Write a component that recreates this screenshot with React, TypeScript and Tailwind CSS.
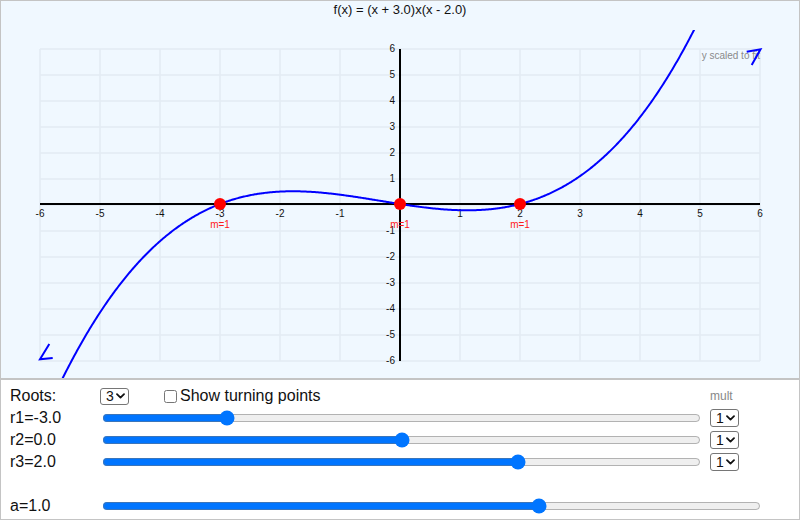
import { useState } from 'react'

const X0 = 400
const Y0 = 204
const UX = 60
const UY = 26
const K = 1.55

const font = "'Liberation Sans', Arial, sans-serif"

function fmtFactor(r: number) {
  if (r === 0) return 'x'
  return r < 0 ? `(x + ${(-r).toFixed(1)})` : `(x - ${r.toFixed(1)})`
}

function Chevron({ className }: { className?: string }) {
  return (
    <svg className={className} width="9" height="6" viewBox="0 0 9 6">
      <path d="M1 1.2 L4.5 4.6 L8 1.2" fill="none" stroke="#111" strokeWidth="1.8" strokeLinecap="round" strokeLinejoin="round" />
    </svg>
  )
}

function MiniSelect({ value, onChange, options, h }: { value: number; onChange: (v: number) => void; options: number[]; h: string }) {
  return (
    <div className="relative inline-block">
      <select
        value={value}
        onChange={(e) => onChange(parseInt(e.target.value))}
        className={`appearance-none block w-[29px] ${h} border border-[#767676] rounded-[3px] bg-white pl-[5px] text-[14px] leading-none text-[#111] outline-none`}
      >
        {options.map((o) => (
          <option key={o} value={o}>{o}</option>
        ))}
      </select>
      <Chevron className="absolute right-[4px] top-1/2 -translate-y-1/2 pointer-events-none" />
    </div>
  )
}

function Graph({ roots, a }: { roots: number[]; a: number }) {
  const f = (x: number) => roots.reduce((p, r) => p * (x - r), a)
  const pts: string[] = []
  for (let px = 40; px <= 760; px += 1) {
    const x = (px - X0) / UX
    const py = Y0 - f(x) * K
    pts.push(`${px},${Math.max(-500, Math.min(900, py)).toFixed(2)}`)
  }
  const ticks = [-6, -5, -4, -3, -2, -1, 1, 2, 3, 4, 5, 6]
  const grid = Array.from({ length: 13 }, (_, i) => i)

  return (
    <svg width="798" height="377" viewBox="1 1 798 377" className="block" style={{ fontFamily: font }}>
      <defs>
        <clipPath id="plotclip">
          <rect x="0" y="30" width="800" height="350" />
        </clipPath>
      </defs>
      <rect x="0" y="0" width="800" height="380" fill="#f0f8ff" />
      {grid.map((i) => (
        <line key={'v' + i} x1={40 + i * UX} y1={49} x2={40 + i * UX} y2={361} stroke="#e3ebf3" strokeWidth="1.5" />
      ))}
      {grid.map((i) => (
        <line key={'h' + i} x1={40} y1={49 + i * UY} x2={760} y2={49 + i * UY} stroke="#e3ebf3" strokeWidth="1.5" />
      ))}
      <line x1={40} y1={Y0} x2={760} y2={Y0} stroke="#000" strokeWidth="2" />
      <line x1={X0} y1={49} x2={X0} y2={361} stroke="#000" strokeWidth="2" />

      <text x={400} y={14} fontSize="13" textAnchor="middle" fill="#111">
        f(x) = {a === 1 ? '' : a.toFixed(1)}{roots.map(fmtFactor).join('')}
      </text>

      {ticks.map((t) => (
        <text key={'xl' + t} x={X0 + t * UX} y={216.8} fontSize="10" textAnchor="middle" fill="#111">{t}</text>
      ))}
      {ticks.map((t) => (
        <text key={'yl' + t} x={395} y={Y0 - t * UY + 3.8} fontSize="10" textAnchor="end" fill="#111">{t}</text>
      ))}

      <text x={760} y={59} fontSize="10" textAnchor="end" fill="#8a8a8a">y scaled to fit</text>

      <polyline points={pts.join(' ')} fill="none" stroke="#0000ff" strokeWidth="2" clipPath="url(#plotclip)" />

      <path d="M746.7 51.8 L760.5 49.3 L751.7 65" fill="none" stroke="#0000ff" strokeWidth="2" />
      <path d="M49.3 344 L40 359.3 L52.7 358" fill="none" stroke="#0000ff" strokeWidth="2" />

      {roots.map((r, i) => (
        <g key={'r' + i}>
          <circle cx={X0 + r * UX} cy={Y0} r={6} fill="#ff0000" />
          <text x={X0 + r * UX} y={228} fontSize="10" textAnchor="middle" fill="#ff1a1a">m=1</text>
        </g>
      ))}
    </svg>
  )
}

export default function App() {
  const [count, setCount] = useState(3)
  const [roots, setRoots] = useState([-3, 0, 2])
  const [mult, setMult] = useState([1, 1, 1])
  const [a, setA] = useState(1)
  const [turning, setTurning] = useState(false)

  const active = roots.slice(0, count)

  return (
    <div className="w-[800px] h-[522px] bg-white text-[#111]" style={{ fontFamily: font }}>
      <div className="h-[379px] border border-[#c4c4c4]">
        <Graph roots={active} a={a} />
      </div>

      <div className="h-[141px] border border-[#c4c4c4] pl-[9px] pt-[5px] text-[16px]">
        <div className="flex items-center h-[22px]">
          <span className="w-[90px]">Roots:</span>
          <MiniSelect value={count} onChange={setCount} options={[1, 2, 3]} h="h-[17px]" />
          <label className="flex items-center ml-[35px] w-[546px]">
            <input
              type="checkbox"
              checked={turning}
              onChange={(e) => setTurning(e.target.checked)}
              className="m-0 w-[13px] h-[13px]"
            />
            <span className="ml-[3px]">Show turning points</span>
          </label>
          <span className="text-[12px] text-[#888]">mult</span>
        </div>

        {roots.map((r, i) => (
          <div key={i} className="flex items-center h-[22px]">
            <span className="w-[90px]">r{i + 1}={r.toFixed(1)}</span>
            <input
              type="range"
              min={-5}
              max={5}
              step={0.1}
              value={r}
              onChange={(e) => setRoots((rs) => rs.map((v, j) => (j === i ? parseFloat(e.target.value) : v)))}
              className="m-0 ml-[2px] w-[599px]"
            />
            <div className="ml-[9px]">
              <MiniSelect
                value={mult[i]}
                onChange={(v) => setMult((ms) => ms.map((m, j) => (j === i ? v : m)))}
                options={[1, 2, 3]}
                h="h-[18px]"
              />
            </div>
          </div>
        ))}

        <div className="flex items-center h-[22px] mt-[22px]">
          <span className="w-[90px]">a={a.toFixed(1)}</span>
          <input
            type="range"
            min={-3}
            max={3}
            step={0.1}
            value={a}
            onChange={(e) => setA(parseFloat(e.target.value))}
            className="m-0 ml-[2px] w-[659px]"
          />
        </div>
      </div>
    </div>
  )
}
